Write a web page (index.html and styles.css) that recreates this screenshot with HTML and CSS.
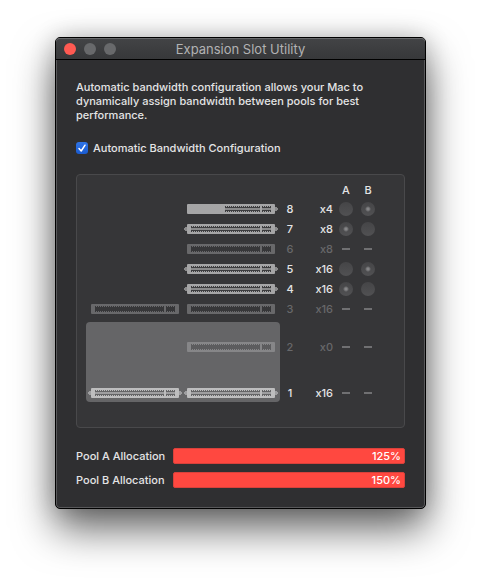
FILE: index.html
```html
<!DOCTYPE html>
<html lang="en">
<head>
    <meta charset="UTF-8">
    <title>Expansion Slot Utility</title>
    <link rel="stylesheet" href="styles.css">
</head>
<body>
<svg class="defs" aria-hidden="true">
    <defs>
        <symbol id="slot" viewBox="0 0 94 10">
            <rect class="shell" x="3" width="88" height="10" rx="1"/>
            <path class="groove" d="M7 3h69v4H7zM78 3h9v4h-9z"/>
            <path class="teeth" d="M7 2.5h69M7 7.5h69M78 2.5h9M78 7.5h9"/>
        </symbol>
        <symbol id="card" viewBox="0 0 94 10">
            <use href="#slot"/>
            <path class="pcb" d="M7 4h69v2H7zM78 4h9v2h-9z"/>
            <path class="pcb" d="M0 4h1V3h2v4H1V6H0zM94 4h-1V3h-2v4h2V6h1z"/>
        </symbol>
        <symbol id="half" viewBox="0 0 94 10">
            <rect class="shell" x="3" width="88" height="10" rx="1"/>
            <path class="groove" d="M41 3h35v4H41zM78 3h9v4h-9z"/>
            <path class="teeth" d="M41 2.5h35M41 7.5h35M78 2.5h9M78 7.5h9"/>
            <path class="pcb" d="M41 4h35v2H41zM78 4h9v2h-9zM94 4h-1V3h-2v4h2V6h1z"/>
        </symbol>
    </defs>
</svg>
<main class="window">
    <header class="titlebar">
        <div class="lights">
            <button class="light close" aria-label="Close"></button>
            <button class="light" aria-label="Minimize" disabled></button>
            <button class="light" aria-label="Zoom" disabled></button>
        </div>
        <h1>Expansion Slot Utility</h1>
    </header>
    <div class="content">
        <p class="intro">Automatic bandwidth configuration allows your Mac to dynamically assign bandwidth between pools for best performance.</p>
        <label class="auto">
            <input type="checkbox" checked>
            <svg class="tick" viewBox="0 0 12 12"><path d="M3 6.5l2.2 2.5L9 3.2"/></svg>
            Automatic Bandwidth Configuration
        </label>
        <div class="panel">
            <table class="slots">
                <thead>
                <tr>
                    <th class="cards"></th>
                    <th class="number"></th>
                    <th class="lanes"></th>
                    <th class="pool">A</th>
                    <th class="pool">B</th>
                </tr>
                </thead>
                <tbody>
                <tr>
                    <td class="cards"><div class="row"><svg class="slot"><use href="#half"/></svg></div></td>
                    <td class="number">8</td>
                    <td class="lanes">x4</td>
                    <td class="pool"><input type="radio" name="slot8" aria-label="Slot 8 pool A" disabled></td>
                    <td class="pool"><input type="radio" name="slot8" aria-label="Slot 8 pool B" disabled checked></td>
                </tr>
                <tr>
                    <td class="cards"><div class="row"><svg class="slot"><use href="#card"/></svg></div></td>
                    <td class="number">7</td>
                    <td class="lanes">x8</td>
                    <td class="pool"><input type="radio" name="slot7" aria-label="Slot 7 pool A" disabled checked></td>
                    <td class="pool"><input type="radio" name="slot7" aria-label="Slot 7 pool B" disabled></td>
                </tr>
                <tr class="empty">
                    <td class="cards"><div class="row"><svg class="slot"><use href="#slot"/></svg></div></td>
                    <td class="number">6</td>
                    <td class="lanes">x8</td>
                    <td class="pool"><span class="dash"></span></td>
                    <td class="pool"><span class="dash"></span></td>
                </tr>
                <tr>
                    <td class="cards"><div class="row"><svg class="slot"><use href="#card"/></svg></div></td>
                    <td class="number">5</td>
                    <td class="lanes">x16</td>
                    <td class="pool"><input type="radio" name="slot5" aria-label="Slot 5 pool A" disabled></td>
                    <td class="pool"><input type="radio" name="slot5" aria-label="Slot 5 pool B" disabled checked></td>
                </tr>
                <tr>
                    <td class="cards"><div class="row"><svg class="slot"><use href="#card"/></svg></div></td>
                    <td class="number">4</td>
                    <td class="lanes">x16</td>
                    <td class="pool"><input type="radio" name="slot4" aria-label="Slot 4 pool A" disabled checked></td>
                    <td class="pool"><input type="radio" name="slot4" aria-label="Slot 4 pool B" disabled></td>
                </tr>
                <tr class="empty last">
                    <td class="cards"><div class="row"><svg class="slot"><use href="#slot"/></svg><svg class="slot"><use href="#slot"/></svg></div></td>
                    <td class="number">3</td>
                    <td class="lanes">x16</td>
                    <td class="pool"><span class="dash"></span></td>
                    <td class="pool"><span class="dash"></span></td>
                </tr>
                </tbody>
                <!-- slots 1 and 2 share one bay -->
                <tbody class="bay">
                <tr class="empty upper">
                    <td class="cards"><div class="row"><svg class="slot"><use href="#slot"/></svg></div></td>
                    <td class="number">2</td>
                    <td class="lanes">x0</td>
                    <td class="pool"><span class="dash"></span></td>
                    <td class="pool"><span class="dash"></span></td>
                </tr>
                <tr class="lower">
                    <td class="cards"><div class="row"><svg class="slot"><use href="#card"/></svg><svg class="slot"><use href="#card"/></svg></div></td>
                    <td class="number">1</td>
                    <td class="lanes">x16</td>
                    <td class="pool"><span class="dash"></span></td>
                    <td class="pool"><span class="dash"></span></td>
                </tr>
                </tbody>
            </table>
        </div>
        <div class="pools">
            <span id="poolA">Pool A Allocation</span>
            <div class="bar" role="meter" aria-labelledby="poolA" aria-valuenow="125" aria-valuemax="150">125%</div>
            <span id="poolB">Pool B Allocation</span>
            <div class="bar" role="meter" aria-labelledby="poolB" aria-valuenow="150" aria-valuemax="150">150%</div>
        </div>
    </div>
</main>
</body>
</html>
```
FILE: styles.css
```css
* {
    box-sizing: border-box;
}

body {
    min-height: 100vh;
    margin: 0;
    padding: 37px 55px;
    background: #ffffff;
    color: #e4e4e5;
    font: 500 11px/14px Inter, "Liberation Sans", sans-serif;
}

.defs {
    position: absolute;
    width: 0;
    height: 0;
}

.window {
    border: 1px solid #000000;
    border-radius: 5px;
    background: #2f2f31;
    box-shadow: inset 0 0 0 1px #58585a, 0 20px 40px rgba(0, 0, 0, 0.6), 0 0 24px rgba(0, 0, 0, 0.2);
}

.titlebar {
    display: grid;
    grid-template-columns: 1fr auto 1fr;
    align-items: center;
    height: 22px;
    padding: 0 8px;
    border-bottom: 1px solid #000000;
    border-radius: 4px 4px 0 0;
    background: linear-gradient(#434446, #37383a);
    box-shadow: inset 0 1px 0 #68696b;
}

.titlebar h1 {
    margin: 0;
    color: #b2b2b3;
    font-size: 13px;
    font-weight: 400;
}

.lights {
    display: flex;
    gap: 8px;
}

.light {
    width: 12px;
    height: 12px;
    padding: 0;
    border: 0;
    border-radius: 50%;
    background: #68696b;
}

.light.close {
    background: #ff5a52;
}

.content {
    padding: 20px;
}

.intro {
    margin: 0 0 19px;
}

.auto {
    display: grid;
    grid-template-columns: 12px 1fr;
    align-items: center;
    column-gap: 5px;
    margin-bottom: 19px;
}

.auto input {
    grid-area: 1 / 1;
    appearance: none;
    width: 12px;
    height: 12px;
    margin: 0;
    border-radius: 3px;
    background: linear-gradient(#2f74e6, #1a5bd0);
}

.tick {
    grid-area: 1 / 1;
    width: 12px;
    height: 12px;
    fill: none;
    stroke: #ffffff;
    stroke-width: 1.5;
    stroke-linecap: round;
    stroke-linejoin: round;
    pointer-events: none;
}

.panel {
    padding: 6px 25px 25px 9px;
    border: 1px solid #49494b;
    border-radius: 4px;
    background: #363638;
}

.slots {
    --shell: #a5a5a6;
    --groove: #3c3c3e;
    --pcb: #8a8a8b;
    width: 100%;
    border-spacing: 0;
}

.slots th, .slots td {
    height: 20px;
    padding: 0;
    font-weight: 500;
    text-align: center;
}

.slots th {
    height: 18px;
}

.slots .cards {
    width: 194px;
}

.slots .number {
    width: 20px;
}

.slots .lanes {
    padding-right: 2px;
    text-align: right;
}

.slots .pool {
    width: 22px;
}

.row {
    display: flex;
    justify-content: flex-end;
    gap: 2px;
    padding: 0 2px;
}

.slot {
    width: 94px;
    height: 10px;
}

.shell {
    fill: var(--shell);
}

.groove {
    fill: var(--groove);
}

.teeth {
    stroke: var(--groove);
    stroke-dasharray: 1 1;
}

.pcb {
    fill: var(--pcb);
}

.empty {
    --shell: #68686a;
    --groove: #363638;
    color: #68686a;
}

.slots .last td {
    height: 23px;
    padding-bottom: 3px;
}

.bay .cards {
    background: #656567;
}

.bay .upper {
    --shell: #868688;
    --groove: #5c5c5e;
}

.bay .upper td {
    height: 50px;
}

.bay .upper .cards {
    border-radius: 4px 4px 0 0;
}

.bay .lower {
    --shell: #bdbdbe;
    --groove: #646466;
    --pcb: #9e9ea0;
}

.bay .lower td {
    height: 30px;
    padding-top: 12px;
}

.bay .lower .cards {
    border-radius: 0 0 4px 4px;
}

.pool input {
    display: block;
    appearance: none;
    width: 14px;
    height: 14px;
    margin: 0 auto;
    border-radius: 50%;
    background: linear-gradient(#454547, #515153);
}

.pool input:checked {
    background: radial-gradient(circle, #858587 1px, transparent 3px), linear-gradient(#454547, #515153);
}

.dash {
    display: block;
    width: 8px;
    height: 2px;
    margin: 0 auto;
    background: #707072;
}

.pools {
    display: grid;
    grid-template-columns: auto 1fr;
    align-items: center;
    gap: 8px;
    margin-top: 20px;
}

.bar {
    padding: 0 3px;
    border: 1px solid #d8413b;
    border-radius: 2px;
    background: #ff4840;
    color: #ffffff;
    text-align: right;
}
```
